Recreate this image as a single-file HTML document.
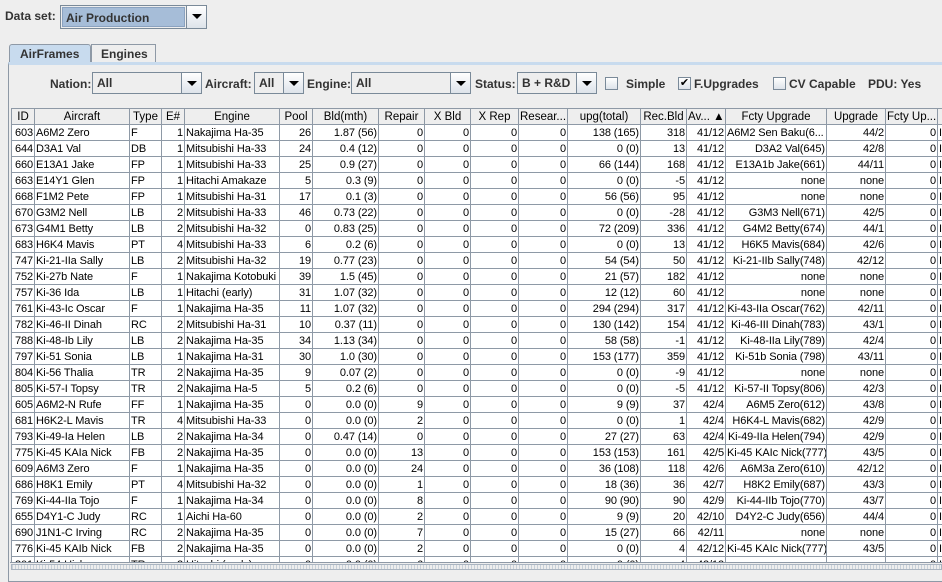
<!DOCTYPE html>
<html><head><meta charset="utf-8"><style>
*{margin:0;padding:0;box-sizing:border-box}
body{width:942px;height:574px;overflow:hidden;background:#eeeeee;font-family:"Liberation Sans",sans-serif;font-size:12px;color:#000;position:relative}
.b{font-weight:bold;color:#333}
.abs{position:absolute}
.combo{position:absolute;height:22px;border:1px solid #7a8a99;background:#eeeeee}
.combo .t{position:absolute;left:1px;top:1px;bottom:1px;padding-left:3px;line-height:19px;font-weight:bold;color:#333;border:1px solid #c4cfdb;background:#eef}
.combo .a{position:absolute;right:0;top:0;bottom:0;width:20px;border-left:1px solid #7a8a99;background:linear-gradient(#fff,#dde3ea)}
.combo .a:after{content:"";position:absolute;left:5px;top:8px;border-left:5px solid transparent;border-right:5px solid transparent;border-top:5px solid #000}
.cb{position:absolute;width:13px;height:13px;border:1px solid #7a8a99;background:linear-gradient(#fff,#dde3ea)}
table{position:absolute;left:11px;top:108px;width:946px;border-collapse:collapse;table-layout:fixed;background:#fff}
td{height:16px;border:1px solid #8e99a6;padding:0 1px;white-space:nowrap;overflow:hidden;text-overflow:clip;text-align:right;font-size:11px;line-height:14px;letter-spacing:-0.1px}
td.l{text-align:left}
tr.h td{background:#eeeeee;text-align:center;font-size:11.5px;border-color:#8e99a6;letter-spacing:0}
</style></head><body>
<div class="abs b" style="left:5px;top:9px">Data set:</div>
<div class="combo" style="left:60px;top:5px;width:147px;height:24px"><div class="t" style="right:21px;background:#a6bdd8;border-color:#8aa2c0;line-height:20px">Air Production</div><div class="a"></div></div>

<div class="abs" style="left:9px;top:44px;width:82px;height:19px;border:1px solid #8e99a6;border-bottom:none;background:#c8dbee;border-radius:3px 3px 0 0"></div>
<div class="abs b" style="left:20px;top:47px">AirFrames</div>
<div class="abs" style="left:91px;top:44px;width:65px;height:18px;border:1px solid #8e99a6;border-bottom:none;background:#eeeeee"></div>
<div class="abs b" style="left:101px;top:47px">Engines</div>
<div class="abs" style="left:8px;top:62px;width:940px;height:520px;border:1px solid #8e99a6;border-top:3px solid #c8dbee;border-right:none"></div>

<div class="abs b" style="left:50px;top:77px">Nation:</div>
<div class="combo" style="left:92px;top:72px;width:110px"><div class="t" style="right:21px;background:#eeeeee;border:none">All</div><div class="a"></div></div>
<div class="abs b" style="left:205px;top:77px">Aircraft:</div>
<div class="combo" style="left:254px;top:72px;width:50px"><div class="t" style="right:21px;background:#eeeeee;border:none">All</div><div class="a"></div></div>
<div class="abs b" style="left:307px;top:77px">Engine:</div>
<div class="combo" style="left:351px;top:72px;width:120px"><div class="t" style="right:21px;background:#eeeeee;border:none">All</div><div class="a"></div></div>
<div class="abs b" style="left:475px;top:77px">Status:</div>
<div class="combo" style="left:517px;top:72px;width:80px"><div class="t" style="right:21px;background:#eeeeee;border:none">B + R&amp;D</div><div class="a"></div></div>
<div class="cb" style="left:605px;top:77px"></div><div class="abs b" style="left:626px;top:77px">Simple</div>
<div class="cb" style="left:678px;top:77px;font-size:11px;line-height:11px;text-align:center">✔</div><div class="abs b" style="left:694px;top:77px">F.Upgrades</div>
<div class="cb" style="left:773px;top:77px"></div><div class="abs b" style="left:789px;top:77px">CV Capable</div>
<div class="abs b" style="left:868px;top:77px">PDU: Yes</div>

<table>
<colgroup><col style="width:23px"><col style="width:95px"><col style="width:32px"><col style="width:23px"><col style="width:95px"><col style="width:33px"><col style="width:66px"><col style="width:46px"><col style="width:46px"><col style="width:48px"><col style="width:49px"><col style="width:73px"><col style="width:46px"><col style="width:39px"><col style="width:101px"><col style="width:59px"><col style="width:52px"><col style="width:20px"></colgroup>
<tr class="h"><td>ID</td><td>Aircraft</td><td>Type</td><td>E#</td><td>Engine</td><td>Pool</td><td>Bld(mth)</td><td>Repair</td><td>X Bld</td><td>X Rep</td><td style="text-align:left">Resear...</td><td>upg(total)</td><td>Rec.Bld</td><td style="text-align:left">Av... ▲</td><td>Fcty Upgrade</td><td>Upgrade</td><td>Fcty Up...</td><td></td></tr>
<tr><td>603</td><td class="l">A6M2 Zero</td><td class="l">F</td><td>1</td><td class="l">Nakajima Ha-35</td><td>26</td><td>1.87 (56)</td><td>0</td><td>0</td><td>0</td><td>0</td><td>138 (165)</td><td>318</td><td>41/12</td><td class="l">A6M2 Sen Baku(6...</td><td>44/2</td><td>0</td><td class="l">I</td></tr>
<tr><td>644</td><td class="l">D3A1 Val</td><td class="l">DB</td><td>1</td><td class="l">Mitsubishi Ha-33</td><td>24</td><td>0.4 (12)</td><td>0</td><td>0</td><td>0</td><td>0</td><td>0 (0)</td><td>13</td><td>41/12</td><td>D3A2 Val(645)</td><td>42/8</td><td>0</td><td class="l">I</td></tr>
<tr><td>660</td><td class="l">E13A1 Jake</td><td class="l">FP</td><td>1</td><td class="l">Mitsubishi Ha-33</td><td>25</td><td>0.9 (27)</td><td>0</td><td>0</td><td>0</td><td>0</td><td>66 (144)</td><td>168</td><td>41/12</td><td>E13A1b Jake(661)</td><td>44/11</td><td>0</td><td class="l">I</td></tr>
<tr><td>663</td><td class="l">E14Y1 Glen</td><td class="l">FP</td><td>1</td><td class="l">Hitachi Amakaze</td><td>5</td><td>0.3 (9)</td><td>0</td><td>0</td><td>0</td><td>0</td><td>0 (0)</td><td>-5</td><td>41/12</td><td>none</td><td>none</td><td>0</td><td class="l">I</td></tr>
<tr><td>668</td><td class="l">F1M2 Pete</td><td class="l">FP</td><td>1</td><td class="l">Mitsubishi Ha-31</td><td>17</td><td>0.1 (3)</td><td>0</td><td>0</td><td>0</td><td>0</td><td>56 (56)</td><td>95</td><td>41/12</td><td>none</td><td>none</td><td>0</td><td class="l">I</td></tr>
<tr><td>670</td><td class="l">G3M2 Nell</td><td class="l">LB</td><td>2</td><td class="l">Mitsubishi Ha-33</td><td>46</td><td>0.73 (22)</td><td>0</td><td>0</td><td>0</td><td>0</td><td>0 (0)</td><td>-28</td><td>41/12</td><td>G3M3 Nell(671)</td><td>42/5</td><td>0</td><td class="l">I</td></tr>
<tr><td>673</td><td class="l">G4M1 Betty</td><td class="l">LB</td><td>2</td><td class="l">Mitsubishi Ha-32</td><td>0</td><td>0.83 (25)</td><td>0</td><td>0</td><td>0</td><td>0</td><td>72 (209)</td><td>336</td><td>41/12</td><td>G4M2 Betty(674)</td><td>44/1</td><td>0</td><td class="l">I</td></tr>
<tr><td>683</td><td class="l">H6K4 Mavis</td><td class="l">PT</td><td>4</td><td class="l">Mitsubishi Ha-33</td><td>6</td><td>0.2 (6)</td><td>0</td><td>0</td><td>0</td><td>0</td><td>0 (0)</td><td>13</td><td>41/12</td><td>H6K5 Mavis(684)</td><td>42/6</td><td>0</td><td class="l">I</td></tr>
<tr><td>747</td><td class="l">Ki-21-IIa Sally</td><td class="l">LB</td><td>2</td><td class="l">Mitsubishi Ha-32</td><td>19</td><td>0.77 (23)</td><td>0</td><td>0</td><td>0</td><td>0</td><td>54 (54)</td><td>50</td><td>41/12</td><td>Ki-21-IIb Sally(748)</td><td>42/12</td><td>0</td><td class="l">I</td></tr>
<tr><td>752</td><td class="l">Ki-27b Nate</td><td class="l">F</td><td>1</td><td class="l">Nakajima Kotobuki</td><td>39</td><td>1.5 (45)</td><td>0</td><td>0</td><td>0</td><td>0</td><td>21 (57)</td><td>182</td><td>41/12</td><td>none</td><td>none</td><td>0</td><td class="l">I</td></tr>
<tr><td>757</td><td class="l">Ki-36 Ida</td><td class="l">LB</td><td>1</td><td class="l">Hitachi (early)</td><td>31</td><td>1.07 (32)</td><td>0</td><td>0</td><td>0</td><td>0</td><td>12 (12)</td><td>60</td><td>41/12</td><td>none</td><td>none</td><td>0</td><td class="l">I</td></tr>
<tr><td>761</td><td class="l">Ki-43-Ic Oscar</td><td class="l">F</td><td>1</td><td class="l">Nakajima Ha-35</td><td>11</td><td>1.07 (32)</td><td>0</td><td>0</td><td>0</td><td>0</td><td>294 (294)</td><td>317</td><td>41/12</td><td>Ki-43-IIa Oscar(762)</td><td>42/11</td><td>0</td><td class="l">I</td></tr>
<tr><td>782</td><td class="l">Ki-46-II Dinah</td><td class="l">RC</td><td>2</td><td class="l">Mitsubishi Ha-31</td><td>10</td><td>0.37 (11)</td><td>0</td><td>0</td><td>0</td><td>0</td><td>130 (142)</td><td>154</td><td>41/12</td><td>Ki-46-III Dinah(783)</td><td>43/1</td><td>0</td><td class="l">I</td></tr>
<tr><td>788</td><td class="l">Ki-48-Ib Lily</td><td class="l">LB</td><td>2</td><td class="l">Nakajima Ha-35</td><td>34</td><td>1.13 (34)</td><td>0</td><td>0</td><td>0</td><td>0</td><td>58 (58)</td><td>-1</td><td>41/12</td><td>Ki-48-IIa Lily(789)</td><td>42/4</td><td>0</td><td class="l">I</td></tr>
<tr><td>797</td><td class="l">Ki-51 Sonia</td><td class="l">LB</td><td>1</td><td class="l">Nakajima Ha-31</td><td>30</td><td>1.0 (30)</td><td>0</td><td>0</td><td>0</td><td>0</td><td>153 (177)</td><td>359</td><td>41/12</td><td>Ki-51b Sonia (798)</td><td>43/11</td><td>0</td><td class="l">I</td></tr>
<tr><td>804</td><td class="l">Ki-56 Thalia</td><td class="l">TR</td><td>2</td><td class="l">Nakajima Ha-35</td><td>9</td><td>0.07 (2)</td><td>0</td><td>0</td><td>0</td><td>0</td><td>0 (0)</td><td>-9</td><td>41/12</td><td>none</td><td>none</td><td>0</td><td class="l">I</td></tr>
<tr><td>805</td><td class="l">Ki-57-I Topsy</td><td class="l">TR</td><td>2</td><td class="l">Nakajima Ha-5</td><td>5</td><td>0.2 (6)</td><td>0</td><td>0</td><td>0</td><td>0</td><td>0 (0)</td><td>-5</td><td>41/12</td><td>Ki-57-II Topsy(806)</td><td>42/3</td><td>0</td><td class="l">I</td></tr>
<tr><td>605</td><td class="l">A6M2-N Rufe</td><td class="l">FF</td><td>1</td><td class="l">Nakajima Ha-35</td><td>0</td><td>0.0 (0)</td><td>9</td><td>0</td><td>0</td><td>0</td><td>9 (9)</td><td>37</td><td>42/4</td><td>A6M5 Zero(612)</td><td>43/8</td><td>0</td><td class="l">I</td></tr>
<tr><td>681</td><td class="l">H6K2-L Mavis</td><td class="l">TR</td><td>4</td><td class="l">Mitsubishi Ha-33</td><td>0</td><td>0.0 (0)</td><td>2</td><td>0</td><td>0</td><td>0</td><td>0 (0)</td><td>1</td><td>42/4</td><td>H6K4-L Mavis(682)</td><td>42/9</td><td>0</td><td class="l">I</td></tr>
<tr><td>793</td><td class="l">Ki-49-Ia Helen</td><td class="l">LB</td><td>2</td><td class="l">Nakajima Ha-34</td><td>0</td><td>0.47 (14)</td><td>0</td><td>0</td><td>0</td><td>0</td><td>27 (27)</td><td>63</td><td>42/4</td><td>Ki-49-IIa Helen(794)</td><td>42/9</td><td>0</td><td class="l">I</td></tr>
<tr><td>775</td><td class="l">Ki-45 KAIa Nick</td><td class="l">FB</td><td>2</td><td class="l">Nakajima Ha-35</td><td>0</td><td>0.0 (0)</td><td>13</td><td>0</td><td>0</td><td>0</td><td>153 (153)</td><td>161</td><td>42/5</td><td>Ki-45 KAIc Nick(777)</td><td>43/5</td><td>0</td><td class="l">I</td></tr>
<tr><td>609</td><td class="l">A6M3 Zero</td><td class="l">F</td><td>1</td><td class="l">Nakajima Ha-35</td><td>0</td><td>0.0 (0)</td><td>24</td><td>0</td><td>0</td><td>0</td><td>36 (108)</td><td>118</td><td>42/6</td><td>A6M3a Zero(610)</td><td>42/12</td><td>0</td><td class="l">I</td></tr>
<tr><td>686</td><td class="l">H8K1 Emily</td><td class="l">PT</td><td>4</td><td class="l">Mitsubishi Ha-32</td><td>0</td><td>0.0 (0)</td><td>1</td><td>0</td><td>0</td><td>0</td><td>18 (36)</td><td>36</td><td>42/7</td><td>H8K2 Emily(687)</td><td>43/3</td><td>0</td><td class="l">I</td></tr>
<tr><td>769</td><td class="l">Ki-44-IIa Tojo</td><td class="l">F</td><td>1</td><td class="l">Nakajima Ha-34</td><td>0</td><td>0.0 (0)</td><td>8</td><td>0</td><td>0</td><td>0</td><td>90 (90)</td><td>90</td><td>42/9</td><td>Ki-44-IIb Tojo(770)</td><td>43/7</td><td>0</td><td class="l">I</td></tr>
<tr><td>655</td><td class="l">D4Y1-C Judy</td><td class="l">RC</td><td>1</td><td class="l">Aichi Ha-60</td><td>0</td><td>0.0 (0)</td><td>2</td><td>0</td><td>0</td><td>0</td><td>9 (9)</td><td>20</td><td>42/10</td><td>D4Y2-C Judy(656)</td><td>44/4</td><td>0</td><td class="l">I</td></tr>
<tr><td>690</td><td class="l">J1N1-C Irving</td><td class="l">RC</td><td>2</td><td class="l">Nakajima Ha-35</td><td>0</td><td>0.0 (0)</td><td>7</td><td>0</td><td>0</td><td>0</td><td>15 (27)</td><td>66</td><td>42/11</td><td>none</td><td>none</td><td>0</td><td class="l">I</td></tr>
<tr><td>776</td><td class="l">Ki-45 KAIb Nick</td><td class="l">FB</td><td>2</td><td class="l">Nakajima Ha-35</td><td>0</td><td>0.0 (0)</td><td>2</td><td>0</td><td>0</td><td>0</td><td>0 (0)</td><td>4</td><td>42/12</td><td>Ki-45 KAIc Nick(777)</td><td>43/5</td><td>0</td><td class="l">I</td></tr>
<tr><td>801</td><td class="l">Ki-54 Hickory</td><td class="l">TR</td><td>2</td><td class="l">Hitachi (early)</td><td>0</td><td>0.0 (0)</td><td>6</td><td>0</td><td>0</td><td>0</td><td>0 (0)</td><td>4</td><td>42/12</td><td>none</td><td>none</td><td>0</td><td class="l">I</td></tr>
</table>
<div class="abs" style="left:10px;top:562px;width:932px;height:12px;background:#eeeeee;border-top:1px solid #8e99a6"></div>
<div class="abs" style="left:11px;top:564px;width:931px;height:6px;background:repeating-linear-gradient(90deg,#c8d0d8 0 1px,#eeeeee 1px 3px);border:1px solid #aab4c0"></div>
</body></html>
